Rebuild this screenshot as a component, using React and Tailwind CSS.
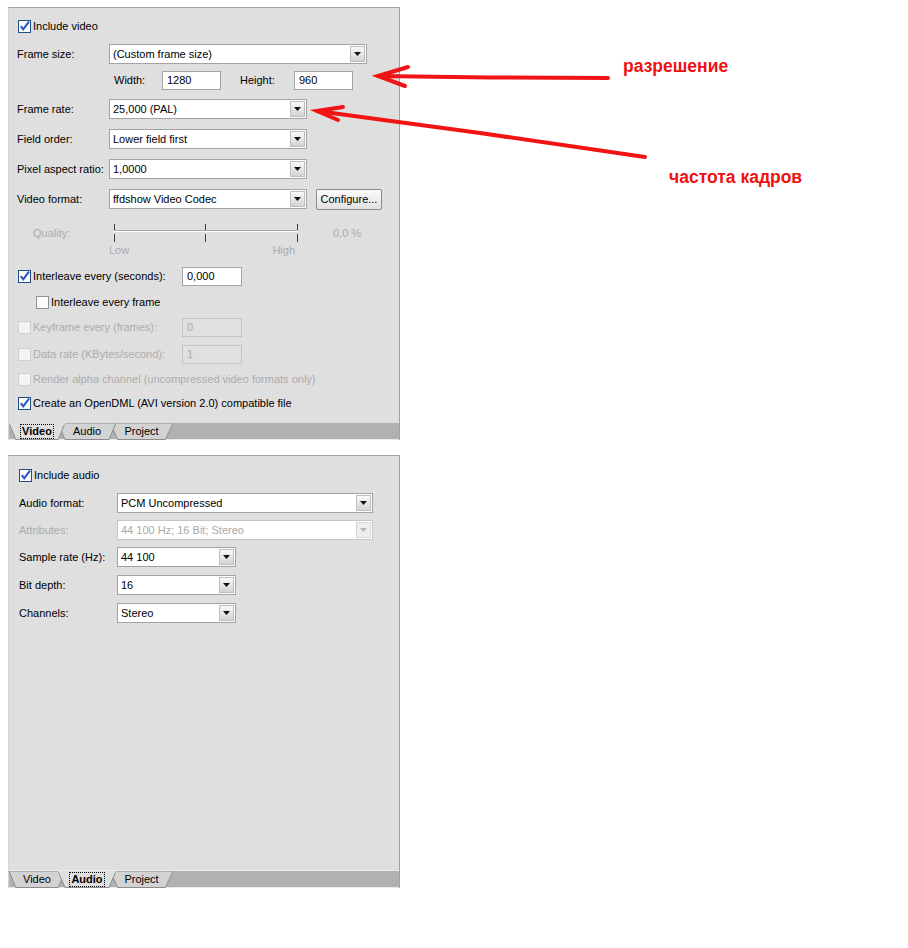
import React from 'react';

const Check = ({ checked = false, disabled = false, dim = false }) => (
    <svg width="13" height="13" viewBox="0 0 13 13" className="shrink-0">
        <rect x="0.5" y="0.5" width="12" height="12" fill={disabled ? '#f3f3f3' : '#fcfcfc'} stroke={disabled ? '#cfcfcf' : dim ? '#8d949c' : '#1f4f86'} />
        {checked && <path d="M2.8 6.2 L5.2 9.3 L11 1.6" fill="none" stroke="#2b55c4" strokeWidth="2.1" />}
    </svg>
);

const Select = ({ value, width, disabled = false }) => (
    <div className={`flex h-[20px] items-stretch border bg-white ${width} ${disabled ? 'border-[#c6c6c6] bg-[#e6e6e6] text-[#a9a9a9]' : 'border-[#a3a3a3] text-black'}`}>
        <div className="flex flex-1 items-center pl-[3px] whitespace-nowrap overflow-hidden">{value}</div>
        <div className={`m-px flex w-[15px] items-center justify-center border ${disabled ? 'border-[#d6d6d6] bg-[#eeeeee]' : 'border-[#bdbdbd] bg-gradient-to-b from-[#fafafa] to-[#d3d3d3]'}`}>
            <svg width="7" height="4" viewBox="0 0 7 4"><path d="M0 0 H7 L3.5 4 Z" fill={disabled ? '#b8b8b8' : '#111'} /></svg>
        </div>
    </div>
);

const Input = ({ value, width, disabled = false }) => (
    <div className={`flex h-[19px] items-center border pl-[4px] ${width} ${disabled ? 'border-[#c3c3c3] bg-[#e0e0e0] text-[#acacac]' : 'border-[#a3a3a3] bg-white text-black'}`}>
        {value}
    </div>
);

const Row = ({ mt, label, labelW, children }) => (
    <div className={`flex h-[20px] items-center ${mt}`}>
        <div className={`shrink-0 ${labelW}`}>{label}</div>
        {children}
    </div>
);

const CheckRow = ({ mt, checked, disabled, dim, indent = 'ml-[1px]', children }) => (
    <div className={`flex h-[20px] items-center ${mt} ${indent}`}>
        <Check checked={checked} disabled={disabled} dim={dim} />
        <span className={`ml-[2px] ${disabled ? 'text-[#acacac]' : 'text-black'}`}>{children}</span>
    </div>
);

const Tab = ({ label, active, width, extra }) => (
    <div className={`relative flex h-[17px] items-center justify-center ${width} ${extra} ${active ? 'z-30' : ''}`}>
        <svg className="absolute inset-0 h-full w-full" viewBox="0 0 100 17" preserveAspectRatio="none">
            <polygon points="0,0 100,0 88,16.5 12,16.5" fill={active ? '#dfdfdf' : '#d3d3d3'} stroke="#8c8c8c" strokeWidth="1" vectorEffect="non-scaling-stroke" />
            {active && <line x1="0" y1="0.5" x2="100" y2="0.5" stroke="#dfdfdf" strokeWidth="2" vectorEffect="non-scaling-stroke" />}
        </svg>
        {active ? (
            <span className="relative border border-dotted border-black px-[1px] leading-[13px] font-bold">{label}</span>
        ) : (
            <span className="relative">{label}</span>
        )}
    </div>
);

const TabBar = ({ active }) => (
    <div className="flex h-[17px] shrink-0 bg-[#b1b1b1] border-b border-[#e9e9e9]">
        <Tab label="Video" active={active === 'Video'} width="w-[56px]" extra="z-20" />
        <Tab label="Audio" active={active === 'Audio'} width="w-[58px]" extra="-ml-[7px] z-10" />
        <Tab label="Project" active={active === 'Project'} width="w-[63px]" extra="-ml-[6px]" />
    </div>
);

const Slider = () => (
    <svg width="192" height="20" viewBox="0 0 192 20">
        <line x1="5" y1="7.5" x2="188" y2="7.5" stroke="#a6a6a6" />
        <line x1="5" y1="8.5" x2="188" y2="8.5" stroke="#ffffff" />
        {[5.5, 96.5, 188.5].map((x) => (
            <g key={x}>
                <line x1={x} y1="1" x2={x} y2="7" stroke="#3c3c3c" />
                <line x1={x} y1="11" x2={x} y2="19" stroke="#3c3c3c" />
            </g>
        ))}
    </svg>
);

const VideoPanel = () => (
    <div className="ml-[8px] mt-[7px] flex h-[433px] w-[392px] flex-col border-t border-r border-l border-t-[#a2a2a2] border-r-[#a2a2a2] border-l-[#d4d4d4] bg-[#dfdfdf]">
        <div className="flex flex-1 flex-col pl-[8px]">
            <CheckRow mt="mt-[8px]" checked>Include video</CheckRow>
            <Row mt="mt-[8px]" label="Frame size:" labelW="w-[92px]">
                <Select value="(Custom frame size)" width="w-[258px]" />
            </Row>
            <div className="mt-[7px] flex h-[19px] items-center">
                <div className="w-[97px] shrink-0" />
                <div className="w-[48px] shrink-0">Width:</div>
                <Input value="1280" width="w-[59px]" />
                <div className="ml-[19px] w-[54px] shrink-0">Height:</div>
                <Input value="960" width="w-[59px]" />
            </div>
            <Row mt="mt-[9px]" label="Frame rate:" labelW="w-[92px]">
                <Select value="25,000 (PAL)" width="w-[198px]" />
            </Row>
            <Row mt="mt-[10px]" label="Field order:" labelW="w-[92px]">
                <Select value="Lower field first" width="w-[198px]" />
            </Row>
            <Row mt="mt-[10px]" label="Pixel aspect ratio:" labelW="w-[92px]">
                <Select value="1,0000" width="w-[198px]" />
            </Row>
            <Row mt="mt-[10px]" label="Video format:" labelW="w-[92px]">
                <Select value="ffdshow Video Codec" width="w-[198px]" />
                <button className="ml-[9px] flex h-[21px] w-[66px] items-center justify-center rounded-[2px] border border-[#8a8a8a] bg-gradient-to-b from-[#fbfbfb] to-[#e2e2e2] text-black">
                    Configure...
                </button>
            </Row>
            <div className="mt-[10px] flex h-[42px] text-[#acacac]">
                <div className="w-[92px] shrink-0 pt-[8px] pl-[16px]">Quality:</div>
                <div className="flex w-[192px] flex-col">
                    <div className="pt-[4px]">
                        <Slider />
                    </div>
                    <div className="mt-[1px] flex justify-between pr-[6px] leading-[13px]">
                        <span>Low</span>
                        <span>High</span>
                    </div>
                </div>
                <div className="ml-[32px] pt-[8px]">0,0 %</div>
            </div>
            <div className="mt-[5px] flex h-[20px] items-center">
                <div className="flex w-[164px] shrink-0 items-center ml-[1px]">
                    <Check checked />
                    <span className="ml-[2px]">Interleave every (seconds):</span>
                </div>
                <Input value="0,000" width="w-[60px]" />
            </div>
            <CheckRow mt="mt-[6px]" indent="ml-[19px]" dim>Interleave every frame</CheckRow>
            <div className="mt-[5px] flex h-[20px] items-center text-[#acacac]">
                <div className="flex w-[164px] shrink-0 items-center ml-[1px]">
                    <Check disabled />
                    <span className="ml-[2px]">Keyframe every (frames):</span>
                </div>
                <Input value="0" width="w-[60px]" disabled />
            </div>
            <div className="mt-[7px] flex h-[20px] items-center text-[#acacac]">
                <div className="flex w-[164px] shrink-0 items-center ml-[1px]">
                    <Check disabled />
                    <span className="ml-[2px]">Data rate (KBytes/second):</span>
                </div>
                <Input value="1" width="w-[60px]" disabled />
            </div>
            <CheckRow mt="mt-[5px]" disabled>Render alpha channel (uncompressed video formats only)</CheckRow>
            <CheckRow mt="mt-[4px]" checked>Create an OpenDML (AVI version 2.0) compatible file</CheckRow>
        </div>
        <TabBar active="Video" />
    </div>
);

const AudioPanel = () => (
    <div className="ml-[8px] mt-[15px] flex h-[433px] w-[392px] flex-col border-t border-r border-l border-t-[#a2a2a2] border-r-[#a2a2a2] border-l-[#d4d4d4] bg-[#dfdfdf]">
        <div className="flex flex-1 flex-col pl-[10px] border-b border-[#ececec]">
            <CheckRow mt="mt-[9px]" checked indent="ml-0">Include audio</CheckRow>
            <Row mt="mt-[8px]" label="Audio format:" labelW="w-[98px]">
                <Select value="PCM Uncompressed" width="w-[256px]" />
            </Row>
            <div className="mt-[7px] flex h-[20px] items-center text-[#acacac]">
                <div className="w-[98px] shrink-0">Attributes:</div>
                <Select value="44 100 Hz; 16 Bit; Stereo" width="w-[256px]" disabled />
            </div>
            <Row mt="mt-[7px]" label="Sample rate (Hz):" labelW="w-[98px]">
                <Select value="44 100" width="w-[119px]" />
            </Row>
            <Row mt="mt-[8px]" label="Bit depth:" labelW="w-[98px]">
                <Select value="16" width="w-[119px]" />
            </Row>
            <Row mt="mt-[8px]" label="Channels:" labelW="w-[98px]">
                <Select value="Stereo" width="w-[119px]" />
            </Row>
        </div>
        <TabBar active="Audio" />
    </div>
);

const Annotations = () => (
    <>
        <svg className="pointer-events-none absolute left-0 top-0" width="908" height="948" viewBox="0 0 908 948">
            <g stroke="#f21414" strokeWidth="4" strokeLinecap="round" fill="none">
                <path d="M608 78 L490 77.5 L378 76" />
                <path d="M408 67 L378 76 L405 86" />
                <path d="M645 157 L480 133 L317 111" />
                <path d="M343 107 L317 111 L338 120" />
            </g>
        </svg>
        <div className="absolute left-[623px] top-[58px] text-[17.5px] leading-[17.5px] font-bold text-[#f01010]">разрешение</div>
        <div className="absolute left-[669px] top-[169px] text-[17.5px] leading-[17.5px] font-bold text-[#f01010]">частота кадров</div>
    </>
);

export default function App() {
    return (
        <div className="relative h-[948px] w-[908px] overflow-hidden bg-white font-['Liberation_Sans',Arial,sans-serif] text-[11px] leading-[13px] text-black">
            <VideoPanel />
            <AudioPanel />
            <Annotations />
        </div>
    );
}
